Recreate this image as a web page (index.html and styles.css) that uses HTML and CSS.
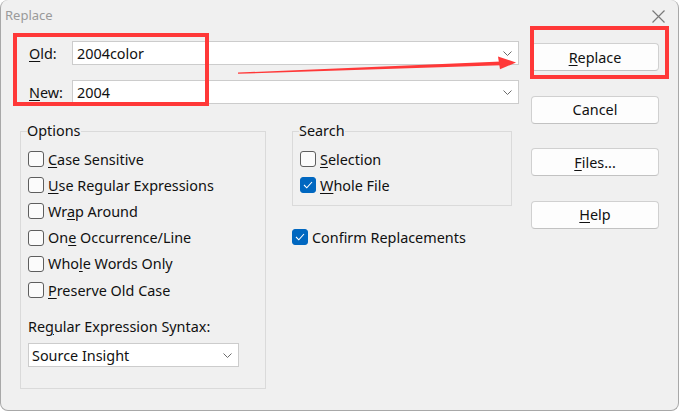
FILE: index.html
```html
<!DOCTYPE html>
<html lang="en">
  <head>
    <meta charset="UTF-8" />
    <meta name="viewport" content="width=device-width, initial-scale=1.0" />
    <title>Replace</title>
    <link rel="stylesheet" href="styles.css">
  </head>
  <body>
    <div class="window">
      <div class="titlebar">
        <span class="title">Replace</span>
        <svg class="close" width="13" height="13" viewBox="0 0 13 13">
          <path d="M0.5 0.5 L12.5 12.5 M12.5 0.5 L0.5 12.5" stroke="#7a7a7a" stroke-width="1.2" fill="none" />
        </svg>
      </div>

      <div class="body">
        <div class="main">
          <div class="fields">
            <div class="field">
              <label class="field-label"><u>O</u>ld:</label>
              <div class="combo">
                <span class="combo-text">2004color</span>
                <svg class="chevron" width="9" height="5" viewBox="0 0 9 5"><path d="M0.5 0.5 L4.5 4.5 L8.5 0.5" stroke="#6b6b6b" fill="none" /></svg>
              </div>
            </div>
            <div class="field">
              <label class="field-label"><u>N</u>ew:</label>
              <div class="combo">
                <span class="combo-text">2004</span>
                <svg class="chevron" width="9" height="5" viewBox="0 0 9 5"><path d="M0.5 0.5 L4.5 4.5 L8.5 0.5" stroke="#6b6b6b" fill="none" /></svg>
              </div>
            </div>
          </div>

          <div class="groups">
            <fieldset class="group options">
              <legend>Options</legend>
              <div class="checks">
                <label class="check"><span class="box"></span><span><u>C</u>ase Sensitive</span></label>
                <label class="check"><span class="box"></span><span><u>U</u>se Regular Expressions</span></label>
                <label class="check"><span class="box"></span><span>Wr<u>a</u>p Around</span></label>
                <label class="check"><span class="box"></span><span>On<u>e</u> Occurrence/Line</span></label>
                <label class="check"><span class="box"></span><span>Who<u>l</u>e Words Only</span></label>
                <label class="check"><span class="box"></span><span><u>P</u>reserve Old Case</span></label>
              </div>
              <div class="syntax-label">Re<u>g</u>ular Expression Syntax:</div>
              <div class="combo select">
                <span class="combo-text">Source Insight</span>
                <svg class="chevron" width="9" height="5" viewBox="0 0 9 5"><path d="M0.5 0.5 L4.5 4.5 L8.5 0.5" stroke="#6b6b6b" fill="none" /></svg>
              </div>
            </fieldset>

            <div class="side">
              <fieldset class="group search">
                <legend>Search</legend>
                <div class="checks">
                  <label class="check"><span class="box"></span><span><u>S</u>election</span></label>
                  <label class="check"><span class="box checked"><svg width="10" height="8" viewBox="0 0 10 8"><path d="M1 4 L3.8 6.8 L9 1" stroke="#fff" stroke-width="1.1" fill="none" /></svg></span><span><u>W</u>hole File</span></label>
                </div>
              </fieldset>
              <label class="check confirm"><span class="box checked"><svg width="10" height="8" viewBox="0 0 10 8"><path d="M1 4 L3.8 6.8 L9 1" stroke="#fff" stroke-width="1.1" fill="none" /></svg></span><span>Conf<u>i</u>rm Replacements</span></label>
            </div>
          </div>
        </div>

        <div class="buttons">
          <button class="button"><u>R</u>eplace</button>
          <button class="button">Cancel</button>
          <button class="button"><u>F</u>iles...</button>
          <button class="button"><u>H</u>elp</button>
        </div>
      </div>

      <!-- annotation marks drawn over the dialog -->
      <div class="mark mark-fields"></div>
      <div class="mark mark-replace"></div>
      <svg class="arrow" width="677" height="410" viewBox="1 0 677 410">
        <polygon points="238,72.6 501,61.4 501,65.2 238,73.8" fill="#ff3838" />
        <polygon points="516,62.6 498,56.4 500,69.2" fill="#ff3838" />
      </svg>
    </div>
  </body>
</html>
```

FILE: styles.css
```css
body {
  margin: 0;
  background-color: #ffffff;
  font-family: "Noto Sans", "Open Sans", sans-serif;
  font-size: 14.4px;
  color: #111111;
}
u {
  text-underline-offset: 2px;
}
.window {
  position: relative;
  width: 677px;
  height: 410px;
  background-color: #f0f0f0;
  border: 1px solid #a8a8a8;
  border-top: none;
  border-radius: 8px;
}
.titlebar {
  height: 30px;
  display: flex;
  align-items: center;
  justify-content: space-between;
  padding: 0 13px 0 4px;
}
.title {
  font-size: 13px;
  color: #9a9a9a;
  margin-top: -1px;
}
.close {
  margin-top: 2px;
}
.body {
  display: flex;
  gap: 12px;
  padding-left: 19px;
}
.main {
  width: 499px;
}
.fields {
  display: flex;
  flex-direction: column;
  gap: 15px;
  padding: 11px 0 0 9px;
}
.field {
  display: flex;
  align-items: center;
}
.field-label {
  width: 43px;
}
.combo {
  box-sizing: border-box;
  height: 24px;
  flex: 1;
  display: flex;
  align-items: center;
  justify-content: space-between;
  padding: 0 6px 0 4px;
  background-color: #fff;
  border: 1px solid #cccccc;
}
.groups {
  display: flex;
  gap: 26px;
  margin-top: 17px;
}
.group {
  margin: 0;
  padding: 0 6px;
  border: 1px solid #dadada;
}
.group legend {
  padding: 0;
  line-height: 20px;
}
.options {
  width: 232px;
  padding-bottom: 21px;
}
.search {
  width: 206px;
  padding-bottom: 7px;
}
.checks {
  padding-top: 5px;
}
.check {
  display: flex;
  align-items: center;
  height: 26.2px;
}
.box {
  box-sizing: border-box;
  width: 16px;
  height: 16px;
  margin: 0 4px 0 1px;
  border: 1px solid #5e5e5e;
  border-radius: 3px;
  background-color: #fbfbfb;
  display: flex;
  align-items: center;
  justify-content: center;
}
.box.checked {
  background-color: #0067c0;
  border-color: #0067c0;
}
.syntax-label {
  margin: 14px 0 0 1px;
  line-height: 20px;
}
.select {
  width: 211px;
  margin: 6px 0 0 1px;
  flex: none;
  padding-left: 3px;
}
.confirm {
  margin-top: 18px;
}
.confirm .box {
  margin-left: 0;
}
.buttons {
  display: flex;
  flex-direction: column;
  gap: 24.5px;
  padding-top: 13px;
}
.button {
  width: 128px;
  height: 28px;
  font-family: inherit;
  font-size: 14.4px;
  color: #111111;
  background-color: #fdfdfd;
  border: 1px solid #d0d0d0;
  border-bottom-color: #c2c2c2;
  border-radius: 4px;
  padding: 0;
}
.mark {
  position: absolute;
  box-sizing: border-box;
  border: 4px solid #ff3838;
}
.mark-fields {
  left: 12px;
  top: 33px;
  width: 196px;
  height: 73px;
}
.mark-replace {
  left: 529px;
  top: 26px;
  width: 139px;
  height: 53px;
}
.arrow {
  position: absolute;
  left: 0;
  top: 0;
  pointer-events: none;
}
```
